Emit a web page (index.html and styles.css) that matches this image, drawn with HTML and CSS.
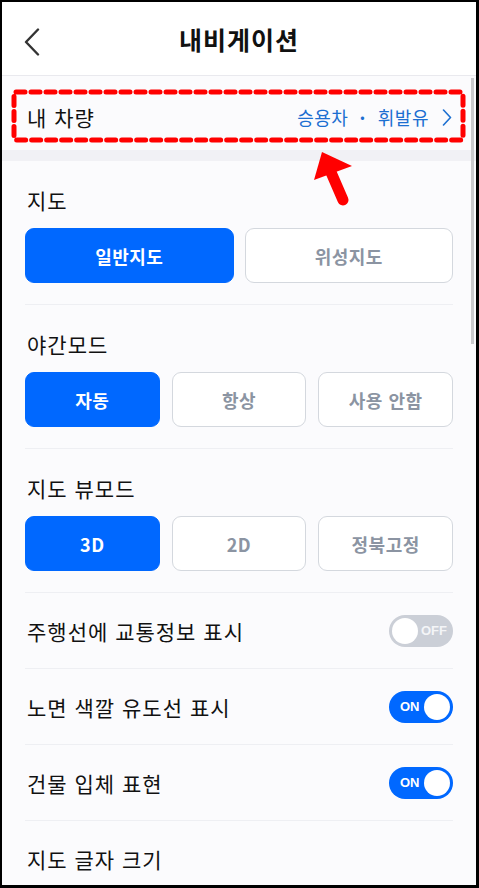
FILE: index.html
```html
<!DOCTYPE html>
<html lang="ko">
<head>
  <meta charset="UTF-8">
  <meta name="viewport" content="width=device-width, initial-scale=1.0">
  <title>내비게이션</title>
  <link rel="stylesheet" href="styles.css">
</head>
<body>
  <div class="frame">
    <header class="topbar">
      <button class="back" aria-label="뒤로">
        <svg width="16" height="28" viewBox="0 0 16 28"><path d="M14 1.5 L2 14 L14 26.5" fill="none" stroke="#333" stroke-width="2.4" stroke-linecap="round" stroke-linejoin="round"/></svg>
      </button>
      <h1>내비게이션</h1>
    </header>

    <div class="content">
      <div class="car-row">
        <span class="row-title">내 차량</span>
        <span class="car-value">
          <span>승용차</span><span class="dot">·</span><span>휘발유</span>
          <svg width="10" height="17" viewBox="0 0 10 17"><path d="M1.5 1 L8.5 8.5 L1.5 16" fill="none" stroke="#1c6fd1" stroke-width="1.6" stroke-linecap="round" stroke-linejoin="round"/></svg>
        </span>
      </div>
      <div class="band"></div>

      <section class="group">
        <h2 class="row-title">지도</h2>
        <div class="options two">
          <button class="opt active">일반지도</button>
          <button class="opt">위성지도</button>
        </div>
      </section>

      <section class="group">
        <h2 class="row-title">야간모드</h2>
        <div class="options three">
          <button class="opt active">자동</button>
          <button class="opt">항상</button>
          <button class="opt">사용 안함</button>
        </div>
      </section>

      <section class="group">
        <h2 class="row-title">지도 뷰모드</h2>
        <div class="options three">
          <button class="opt active">3D</button>
          <button class="opt">2D</button>
          <button class="opt">정북고정</button>
        </div>
      </section>

      <div class="toggle-row">
        <span class="row-title">주행선에 교통정보 표시</span>
        <span class="switch off"><span class="knob"></span><span class="switch-text">OFF</span></span>
      </div>
      <div class="toggle-row">
        <span class="row-title">노면 색깔 유도선 표시</span>
        <span class="switch on"><span class="switch-text">ON</span><span class="knob"></span></span>
      </div>
      <div class="toggle-row">
        <span class="row-title">건물 입체 표현</span>
        <span class="switch on"><span class="switch-text">ON</span><span class="knob"></span></span>
      </div>
      <div class="toggle-row last">
        <span class="row-title">지도 글자 크기</span>
      </div>
    </div>

    <div class="scrollbar"></div>

    <!-- annotation over the screenshot -->
    <svg class="mark" width="479" height="220" viewBox="0 0 479 220">
      <rect x="14" y="92" width="449" height="48" rx="2" fill="none" stroke="#ff0000" stroke-width="5" stroke-dasharray="9 6" stroke-linecap="round"/>
      <path d="M343 200 L330 170" stroke="#ff0000" stroke-width="11" stroke-linecap="round"/>
      <polygon points="322,152 314,180 352,166" fill="#ff0000"/>
    </svg>
  </div>
</body>
</html>
```

FILE: styles.css
```css
/* General Styles */
* {
  box-sizing: border-box;
}

body {
  margin: 0;
  font-family: "Noto Sans CJK KR", "Noto Sans", sans-serif;
  background-color: #000;
}

.frame {
  position: relative;
  width: 479px;
  height: 888px;
  border: 2px solid #000;
  border-right-width: 3px;
  border-bottom-width: 3px;
  background-color: #fbfbfd;
  overflow: hidden;
}

/* Header */
.topbar {
  height: 74px;
  background-color: #fff;
  border-bottom: 1px solid #e9e9ee;
  display: flex;
  align-items: center;
  justify-content: center;
  position: relative;
}

.back {
  position: absolute;
  left: 22px;
  top: 26px;
  padding: 0;
  border: none;
  background: none;
  display: flex;
}

.topbar h1 {
  margin: 0;
  font-size: 25px;
  font-weight: 700;
  color: #111;
  letter-spacing: 1px;
}

.row-title {
  margin: 0;
  font-size: 21px;
  font-weight: 400;
  line-height: 28px;
  letter-spacing: 1px;
  color: #111;
}

/* Car row */
.car-row {
  height: 74px;
  padding: 8px 23px 0 25px;
  display: flex;
  align-items: center;
  justify-content: space-between;
}

.car-value {
  display: flex;
  align-items: center;
  font-size: 18px;
  letter-spacing: 0.5px;
  color: #1c6fd1;
}

.car-value .dot {
  font-weight: 700;
  margin: 0 12px 0 11px;
}

.car-value svg {
  margin: 0 1px 0 13px;
}

.band {
  height: 11px;
  background-color: #f1f1f5;
}

/* Option groups */
.group {
  margin: 0 23px;
  padding: 25px 0 21px;
  border-bottom: 1px solid #eeeff3;
}

.group .row-title {
  margin-left: 2px;
}

.options {
  margin-top: 14px;
  display: grid;
  gap: 11px;
}

.options.two {
  grid-template-columns: 1fr 1fr;
}

.options.three {
  grid-template-columns: 1fr 1fr 1fr;
  gap: 12px;
}

.opt {
  height: 55px;
  border: 1px solid #d4d8de;
  border-radius: 9px;
  background-color: #fff;
  color: #8b94a2;
  font-family: inherit;
  font-size: 18px;
  font-weight: 700;
  letter-spacing: 0.5px;
}

.opt.active {
  background-color: #0068ff;
  border-color: #0068ff;
  color: #fff;
}

/* Toggle rows */
.toggle-row {
  margin: 0 23px;
  height: 76px;
  padding-left: 2px;
  display: flex;
  align-items: center;
  justify-content: space-between;
  border-bottom: 1px solid #eeeff3;
}

.toggle-row.last {
  border-bottom: none;
}

.switch {
  width: 64px;
  height: 32px;
  border-radius: 16px;
  display: flex;
  align-items: center;
  padding: 0 3px;
  font-family: "Liberation Sans", Arial, sans-serif;
  font-size: 13px;
  font-weight: 700;
  color: #fff;
}

.switch.on {
  background-color: #0068ff;
}

.switch.off {
  background-color: #cbcfd7;
}

.knob {
  width: 26px;
  height: 26px;
  border-radius: 50%;
  background-color: #fff;
}

.switch.on .switch-text {
  flex: 1;
  padding-left: 8px;
}

.switch.off .switch-text {
  flex: 1;
  text-align: center;
  color: #f4f5f7;
}

/* Overlays */
.scrollbar {
  position: absolute;
  top: 76px;
  right: 2px;
  width: 3px;
  height: 266px;
  background-color: #c9c9cc;
}

.mark {
  position: absolute;
  left: -2px;
  top: -2px;
  pointer-events: none;
}
```
